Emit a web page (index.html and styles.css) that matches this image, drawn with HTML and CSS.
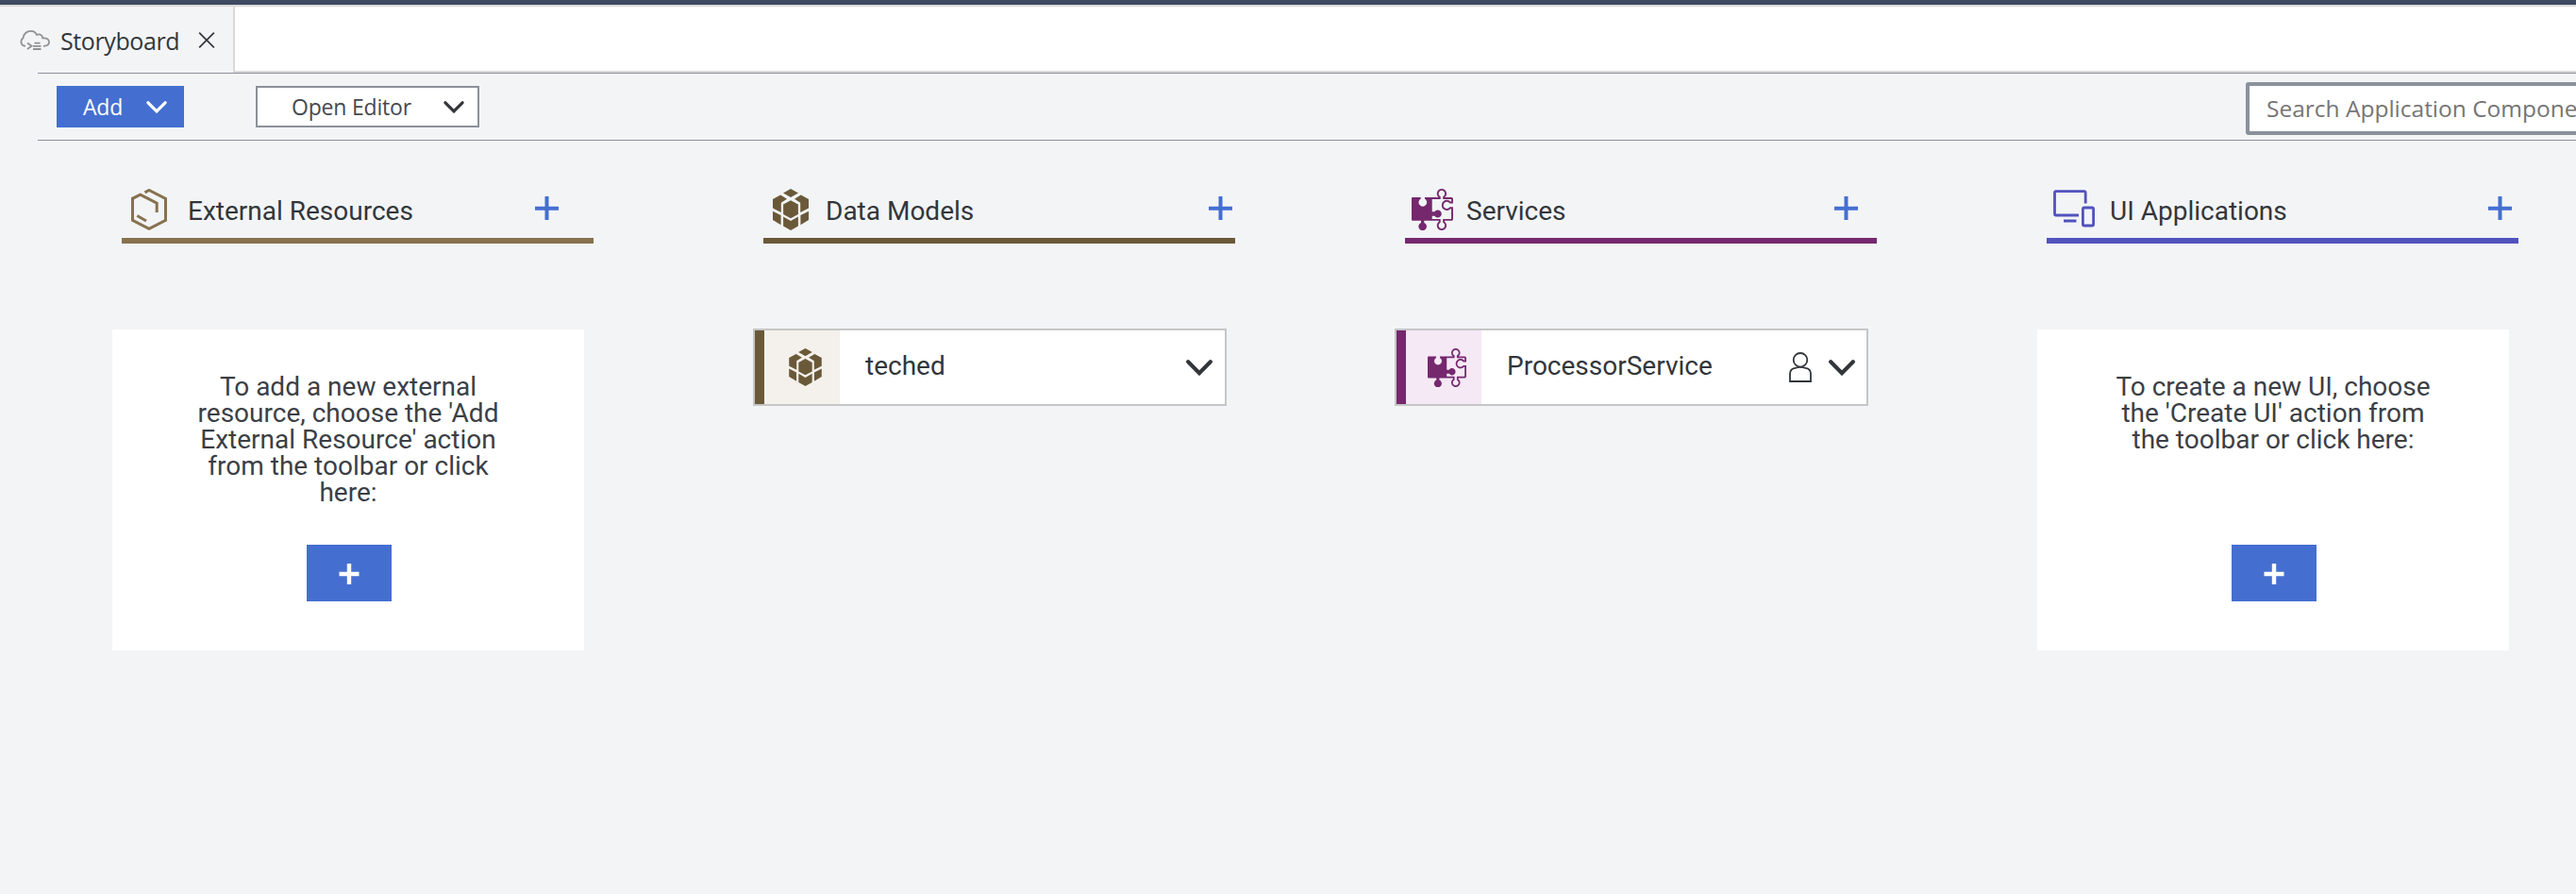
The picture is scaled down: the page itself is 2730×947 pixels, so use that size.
FILE: index.html
```html
<!DOCTYPE html>
<html lang="en">
<head>
<meta charset="utf-8">
<title>Storyboard</title>
<link rel="stylesheet" href="styles.css">
</head>
<body>
<svg class="defs" width="0" height="0">
  <symbol id="cube" viewBox="0 0 38 44">
    <path fill="currentColor" d="M19 0l8 4.5-8 4.6-8-4.6zM8.2 6.5l6.8 4.2-6.2 4V25L0 20.5V11zM29.8 6.5L23 10.7l6.2 4V25l8.8-4.5V11zM19 12.2l7.9 4.4V27L19 31.2 11.1 27V16.600zM0 23.700l8.600 4.400v10.200L0 33zM38 23.700l-8.600 4.400v10.200L38 33zM11.100 29.500L19 34l7.900-4.500v10L19 44l-7.900-4.500z"/>
  </symbol>
  <symbol id="puzzle" viewBox="0 0 44 44">
    <path fill="currentColor" d="M1 9H9.700V10.600A4.300 4.300 0 1 0 13.900 10.600V9H20.700Q21.700 9 21.700 10V24.300H24.400A4 4 0 1 1 24.400 28.700H21.700V32.800Q21.700 33.800 20.700 33.800H13.300V36A4.300 4.300 0 1 1 10 36V33.800H1Q0 33.800 0 32.800V10Q0 9 1 9z"/>
    <path fill="none" stroke="currentColor" stroke-width="1.900" d="M21 10H29.700V8.700A4.200 4.200 0 1 1 34.100 8.700V10H42.200Q43 10 43 10.800V14.600H41A4.600 4.600 0 1 0 41 20.200H43V32Q43 32.900 42.200 32.900H34.100V35.300A4.200 4.200 0 1 1 29.700 35.300V32.900H21"/>
  </symbol>
  <symbol id="plus" viewBox="0 0 25 25">
    <path fill="none" stroke="currentColor" stroke-width="4" d="M12.500 0V25M0 12.800H25"/>
  </symbol>
  <symbol id="plus-bold" viewBox="0 0 22 22">
    <path fill="none" stroke="currentColor" stroke-width="4.400" d="M11 0V22M.5 11H21.500"/>
  </symbol>
  <symbol id="chev" viewBox="0 0 28 17">
    <path fill="none" stroke="currentColor" stroke-width="4.200" stroke-linecap="round" d="M2.200 2.300L14 14.200 25.800 2.300"/>
  </symbol>
</svg>

<div class="tabs">
  <div class="tab">
    <svg class="cloud" viewBox="0 0 33 21"><g fill="none" stroke="#8f9192" stroke-width="1.800"><path d="M7 16.600H5.500A4.600 4.600 0 0 1 4.600 8.300C5 3.500 9 .9 12.500 .9C15.500 .9 17.800 2.500 18.900 4.800C22.500 3.600 25 5.500 25.300 8.400C29.500 7.800 32 10 32 12.500C32 15.300 30 16.700 26 16.800"/><path d="M9 13.500L13.500 16.800 9 20M16.500 13.600H22.500M15 16.900H23.500M15 20H23.500"/></g></svg>
    <span class="tab-label">Storyboard</span>
    <svg class="close" viewBox="0 0 18 18"><path fill="none" stroke="#32363a" stroke-width="1.800" d="M.7.7L17.300 17.300M17.300.7L.7 17.300"/></svg>
  </div>
  <div class="strip"></div>
</div>

<div class="toolbar">
  <button class="btn add"><span>Add</span><svg class="chev-s"><use href="#chev"/></svg></button>
  <button class="btn open"><span>Open Editor</span><svg class="chev-s"><use href="#chev"/></svg></button>
  <div class="search">Search Application Components</div>
</div>

<main class="board">
  <section class="col ext">
    <header class="head">
      <svg class="icon hex" viewBox="0 0 38 44"><path fill="none" stroke="currentColor" stroke-width="3" d="M14.500 3.800L19 1.500 36.500 10.500V33.300L19 42.300 1.500 33.300V10.300L9.700 6.200 27.200 15.200V25M6.300 28.500L16 34"/></svg>
      <h2>External Resources</h2>
      <svg class="plus"><use href="#plus"/></svg>
    </header>
    <div class="empty">
      <p>To add a new external<br>resource, choose the 'Add<br>External Resource' action<br>from the toolbar or click<br>here:</p>
      <button class="create"><svg><use href="#plus-bold"/></svg></button>
    </div>
  </section>
  <section class="col data">
    <header class="head">
      <svg class="icon hex"><use href="#cube"/></svg>
      <h2>Data Models</h2>
      <svg class="plus"><use href="#plus"/></svg>
    </header>
    <div class="item">
      <div class="item-icon"><svg class="mini-cube"><use href="#cube"/></svg></div>
      <span>teched</span>
      <svg class="chev"><use href="#chev"/></svg>
    </div>
  </section>
  <section class="col serv">
    <header class="head">
      <svg class="icon puz"><use href="#puzzle"/></svg>
      <h2>Services</h2>
      <svg class="plus"><use href="#plus"/></svg>
    </header>
    <div class="item">
      <div class="item-icon"><svg class="mini-puz"><use href="#puzzle"/></svg></div>
      <span>ProcessorService</span>
      <svg class="person" viewBox="0 0 24 32"><g fill="none" stroke="currentColor" stroke-width="1.800"><circle cx="12" cy="8.300" r="7.300"/><path d="M6.500 16.800C3 17.300 1 19.800 1 23V31H23V23C23 19.800 21 17.300 17.500 16.800Q12 14.900 6.500 16.800z"/></g></svg>
      <svg class="chev"><use href="#chev"/></svg>
    </div>
  </section>
  <section class="col ui">
    <header class="head">
      <svg class="icon dev" viewBox="0 0 44 40"><g fill="none" stroke="currentColor" stroke-width="2.800"><path d="M34.200 14.500V3.200Q34.200 1.700 32.700 1.700H3Q1.500 1.700 1.500 3.200V25.500Q1.500 27 3 27H27M11 33H24.500"/><rect x="31.400" y="19" width="11.200" height="19" rx="1.500"/></g></svg>
      <h2>UI Applications</h2>
      <svg class="plus"><use href="#plus"/></svg>
    </header>
    <div class="empty">
      <p>To create a new UI, choose<br>the 'Create UI' action from<br>the toolbar or click here:</p>
      <button class="create"><svg><use href="#plus-bold"/></svg></button>
    </div>
  </section>
</main>
</body>
</html>
```
FILE: styles.css
```css
* { box-sizing: border-box; }
body {
  margin: 0;
  height: 947px;
  overflow: hidden;
  background: #f2f4f6;
  border-top: 5px solid #3e4a61;
  font-family: Roboto, sans-serif;
  color: #32363a;
}
svg { display: block; flex: none; }
.defs { position: absolute; }
button { border: 0; padding: 0; margin: 0; }

.tabs { display: flex; height: 72px; border-top: 2px solid #d9d9d9; }
.tab {
  display: flex;
  align-items: center;
  width: 249px;
  border-right: 2px solid #d9d9d9;
  padding-left: 20px;
  font-family: "Open Sans", sans-serif;
}
.cloud { width: 33px; height: 21px; }
.tab-label { width: 146px; margin: 1px 0 0 11px; font-size: 25px; line-height: 34px; letter-spacing: -0.400px; white-space: nowrap; }
.close { width: 18px; height: 17px; }
.strip { flex: 1; background: #fff; border-bottom: 2px solid #d9d9d9; }

.toolbar {
  display: flex;
  height: 72px;
  margin-left: 40px;
  padding: 13px 0 0 20px;
  border-top: 1px solid #8b919b;
  border-bottom: 1px solid #8b919b;
  font-family: "Open Sans", sans-serif;
}
.btn {
  display: flex;
  align-items: center;
  justify-content: space-between;
  height: 44px;
  font: 23px/32px "Open Sans", sans-serif;
  letter-spacing: -0.200px;
  white-space: nowrap;
}
.add { width: 135px; padding: 0 18px 0 28px; background: #446fd1; color: #fff; font-weight: 500; }
.open { width: 237px; margin-left: 76px; padding: 0 14px 0 36px; background: #fff; border: 2px solid #8b919b; color: #45494f; }
.open .chev-s { color: #32363a; }
.chev-s { width: 22px; height: 13px; }
.search {
  width: 440px;
  height: 56px;
  margin: -4px -90px 0 auto;
  padding: 7px 0 0 18px;
  border: 4px solid #8b919b;
  border-radius: 3px;
  background: #fff;
  color: #757575;
  font-size: 24.500px;
  line-height: 34px;
  white-space: nowrap;
}

.board { display: flex; gap: 180px; padding: 51px 0 0 129px; }
.col { flex: none; width: 500px; }
.head { display: flex; height: 58px; border-bottom: 6px solid; }
.head h2 { margin: 7px auto 0 0; font-size: 28px; font-weight: 400; line-height: 34px; color: #32363a; white-space: nowrap; }
.plus { width: 25px; height: 25px; margin-top: 8px; color: #446fd1; }
.hex { width: 38px; height: 44px; margin-left: 10px; }
.puz { width: 44px; height: 44px; margin-left: 7px; }
.dev { width: 44px; height: 40px; margin: 1px 0 0 7px; }
.ext { color: #87714f; }
.ext h2 { padding-left: 22px; }
.ext .plus { margin-right: 37px; }
.data { color: #6a5939; }
.data h2 { padding-left: 18px; }
.data .plus { margin-right: 3px; }
.serv { color: #75286e; }
.serv h2 { padding-left: 14px; }
.serv .plus { margin-right: 20px; }
.ui { color: #5153bd; }
.ui h2 { padding-left: 16px; }
.ui .plus { margin-right: 7px; }

.empty {
  display: flex;
  flex-direction: column;
  align-items: center;
  justify-content: space-between;
  width: 500px;
  height: 340px;
  margin: 91px 0 0 -10px;
  padding: 47px 0 52px 2px;
  background: #fff;
}
.empty p { margin: 0 2px 0 0; font-size: 28px; line-height: 28px; text-align: center; color: #3b3f46; white-space: nowrap; }
.create { display: flex; align-items: center; justify-content: center; width: 90px; height: 60px; background: #446fd1; color: #fff; }
.create svg { width: 22px; height: 22px; margin-top: 1px; }

.item {
  display: flex;
  align-items: center;
  width: 502px;
  height: 82px;
  margin: 90px 0 0 -11px;
  padding-right: 13px;
  border: 2px solid #c6c6c6;
  background: #fff;
}
.item-icon { width: 90px; height: 78px; border-left: 10px solid; padding-top: 19px; }
.data .item-icon { background: #f4f1ec; border-color: #6a5939; }
.serv .item-icon { background: #f5e9f5; border-color: #75286e; }
.mini-cube { width: 35px; height: 40px; margin-left: 26px; }
.mini-puz { width: 41px; height: 41px; margin-left: 23px; }
.item span { margin: 0 auto 2px 27px; font-size: 28px; line-height: 34px; color: #32363a; }
.chev { width: 28px; height: 17px; color: #32363a; }
.person { width: 24px; height: 32px; margin-right: 18px; color: #32363a; }
.serv .item { padding-right: 12px; }
```
